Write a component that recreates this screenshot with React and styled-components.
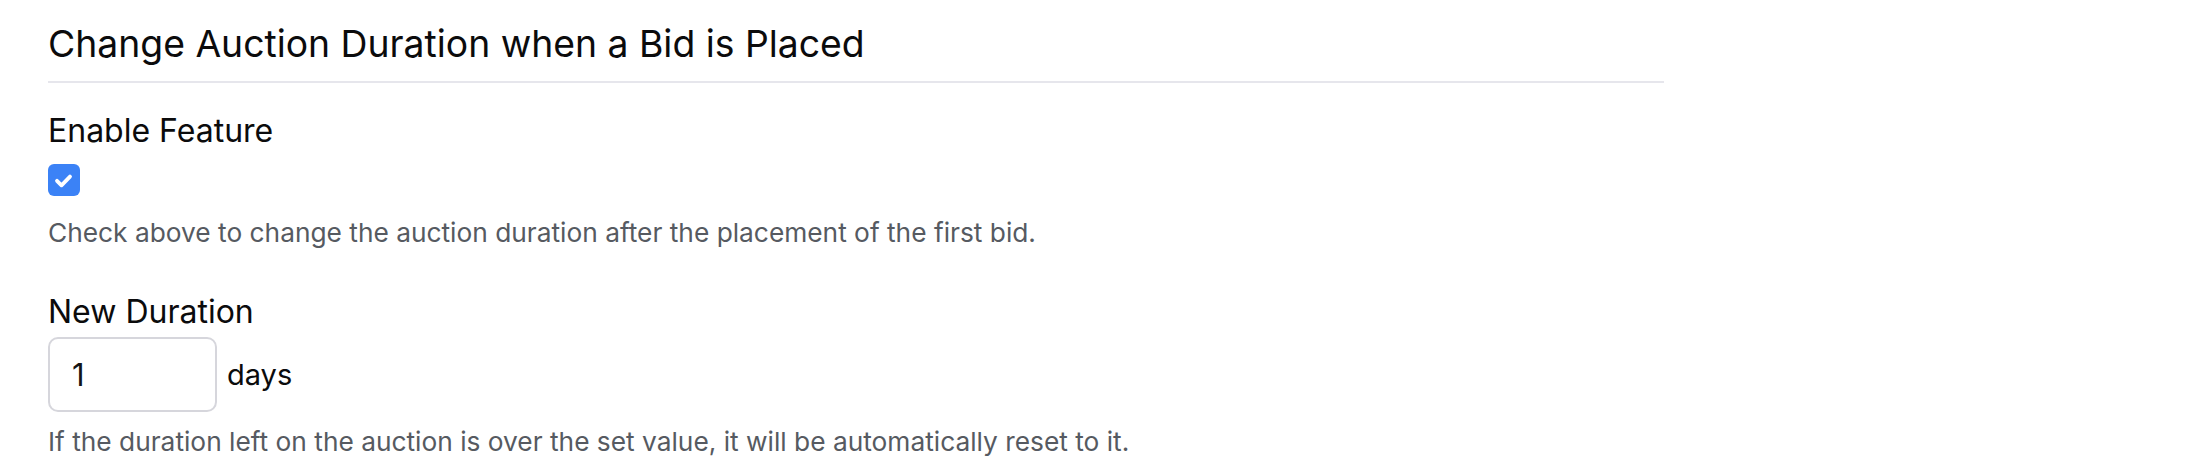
import React, { useState } from "react";
import styled, { createGlobalStyle } from "styled-components";

const Global = createGlobalStyle`
  html, body { margin: 0; padding: 0; background: #ffffff; }
  body { font-family: Inter, "Noto Sans", sans-serif; -webkit-font-smoothing: antialiased; }
  * { box-sizing: border-box; }
`;

const Page = styled.div`
  width: 2200px;
  height: 464px;
  padding: 22px 0 0 48px;
  overflow: hidden;
`;

const Section = styled.section`
  width: 1616px;
  display: flex;
  flex-direction: column;
`;

const Heading = styled.h2`
  margin: 0;
  padding-bottom: 15px;
  border-bottom: 2px solid #e6e6ec;
  font-size: 37.3px;
  line-height: 44px;
  font-weight: 400;
  color: #0b0b0c;
`;

const Field = styled.div`
  display: flex;
  flex-direction: column;
  align-items: flex-start;
  margin-top: ${(p) => p.$top}px;
`;

const Label = styled.label`
  font-size: 32px;
  line-height: 36px;
  font-weight: 400;
  color: #0b0b0c;
  margin-bottom: ${(p) => p.$gap}px;
`;

const CheckBox = styled.button`
  width: 32px;
  height: 32px;
  padding: 0;
  border: none;
  border-radius: 6px;
  background: ${(p) => (p.$on ? "#3b82f6" : "#ffffff")};
  box-shadow: ${(p) => (p.$on ? "none" : "inset 0 0 0 2px #d4d4d8")};
  display: flex;
  align-items: center;
  justify-content: center;
  cursor: pointer;
`;

const Help = styled.p`
  margin: ${(p) => p.$top}px 0 0;
  font-size: 26.3px;
  line-height: 32px;
  color: #565a61;
`;

const InputRow = styled.div`
  display: flex;
  align-items: center;
  gap: 10px;
`;

const NumberInput = styled.input`
  width: 169px;
  height: 75px;
  border: 2px solid #d6d6dc;
  border-radius: 10px;
  padding: 0 0 0 22px;
  font-family: inherit;
  font-size: 31px;
  color: #141416;
  background: #ffffff;
  outline: none;
`;

const Unit = styled.span`
  font-size: 29px;
  color: #0b0b0c;
`;

export default function App() {
  const [on, setOn] = useState(true);
  const [days, setDays] = useState("1");
  return (
    <>
      <Global />
      <Page>
        <Section>
          <Heading>Change Auction Duration when a Bid is Placed</Heading>
          <Field $top={30}>
            <Label $gap={15}>Enable Feature</Label>
            <CheckBox $on={on} onClick={() => setOn(!on)} aria-pressed={on}>
              {on && (
                <svg width="32" height="32" viewBox="0 0 32 32" fill="none">
                  <path
                    d="M9 16.8 L13.5 21.3 L22 12.6"
                    stroke="#ffffff"
                    strokeWidth="3.8"
                    strokeLinecap="round"
                    strokeLinejoin="round"
                  />
                </svg>
              )}
            </CheckBox>
            <Help $top={21}>
              Check above to change the auction duration after the placement of the first bid.
            </Help>
          </Field>
          <Field $top={45}>
            <Label $gap={7}>New Duration</Label>
            <InputRow>
              <NumberInput value={days} onChange={(e) => setDays(e.target.value)} />
              <Unit>days</Unit>
            </InputRow>
            <Help $top={14}>
              If the duration left on the auction is over the set value, it will be automatically reset to it.
            </Help>
          </Field>
        </Section>
      </Page>
    </>
  );
}
